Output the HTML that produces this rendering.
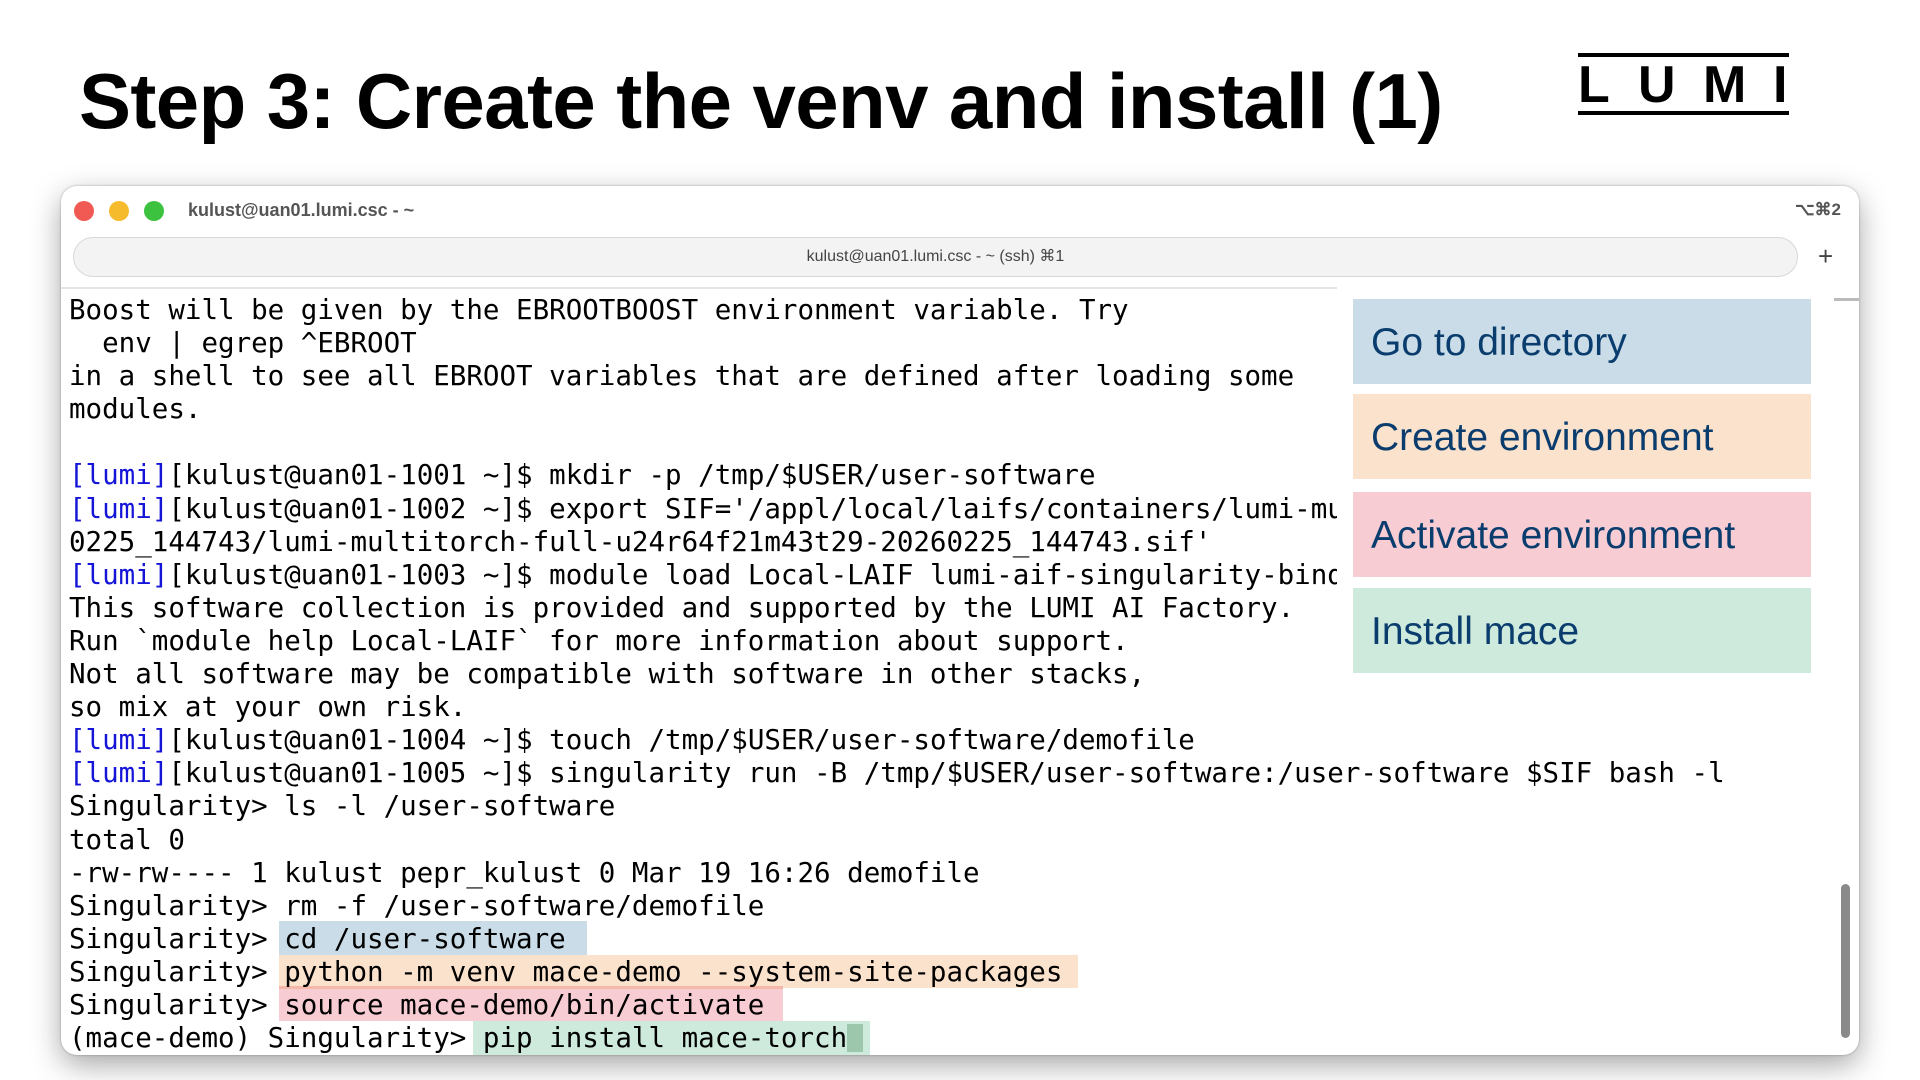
<!DOCTYPE html>
<html><head><meta charset="utf-8"><style>
*{margin:0;padding:0;box-sizing:border-box}
body{width:1920px;height:1080px;background:#fff;position:relative;overflow:hidden;font-family:"Liberation Sans",sans-serif}
.title{position:absolute;left:79px;top:56px;font-size:78px;font-weight:bold;color:#000;letter-spacing:-0.6px;white-space:nowrap}
.logo{position:absolute;left:1578px;top:53px;width:211px;height:62px;border-top:4px solid #000;border-bottom:4px solid #000}
.logo span{position:absolute;top:2px;font-size:52px;font-weight:bold;color:#000;line-height:52px}
.win{position:absolute;left:61px;top:186px;width:1798px;height:869px;background:#fff;border-radius:16px;box-shadow:0 10px 30px rgba(0,0,0,.35),0 0 2px rgba(0,0,0,.3);overflow:hidden}
.dot{position:absolute;top:15px;width:20px;height:20px;border-radius:50%}
.wt{position:absolute;left:127px;top:14px;font-size:18px;font-weight:bold;color:#555}
.k2{position:absolute;right:18px;top:14px;font-size:17px;font-weight:bold;color:#555}
.tab{position:absolute;left:12px;top:51px;width:1725px;height:40px;border:1px solid #d8d8d8;border-radius:20px;background:#f3f3f3;text-align:center;font-size:16px;line-height:38px;color:#444}
.plus{position:absolute;left:1757px;top:55px;font-size:26px;color:#444}
.sep{position:absolute;left:0;top:101px;width:1277px;height:2px;background:#e4e4e4}
.term{position:absolute;left:8px;top:108px;font-family:"DejaVu Sans Mono","Liberation Mono",monospace;font-size:27.5px;line-height:33.1px;color:#000;white-space:pre}
.b{color:#1515d8}
.hl{position:absolute}
.panel{position:absolute;left:1276px;top:99px;width:489px;height:400px;background:#fff}
.box{position:absolute;left:1292px;width:458px;height:85px;color:#0a3d6e;font-size:39px;line-height:87px;padding-left:18px}
.sb{position:absolute;left:1780px;top:698px;width:9px;height:154px;border-radius:5px;background:#8a8a8a}
.sbt{position:absolute;left:1773px;top:112px;width:26px;height:3px;background:#bbb}
</style></head><body>
<div class="title">Step 3: Create the venv and install (1)</div>
<div class="logo"><span style="left:0">L</span><span style="left:60px">U</span><span style="left:125px">M</span><span style="left:195px">I</span></div>
<div class="win">
<div class="dot" style="left:13px;background:#f05a52"></div>
<div class="dot" style="left:48px;background:#f6bb2d"></div>
<div class="dot" style="left:83px;background:#3cc23f"></div>
<div class="wt">kulust@uan01.lumi.csc - ~</div>
<div class="k2">⌥⌘2</div>
<div class="tab">kulust@uan01.lumi.csc - ~ (ssh) ⌘1</div>
<div class="plus">+</div>
<div class="sep"></div>
<div class="hl" style="left:218px;top:735px;width:308px;height:34px;background:#c9dce8"></div>
<div class="hl" style="left:218px;top:769px;width:799px;height:33px;background:#fbe2cc"></div>
<div class="hl" style="left:218px;top:800px;width:504px;height:35px;background:#f7ccd2"></div>
<div class="hl" style="left:218px;top:800px;width:504px;height:3px;background:#f5b8a8"></div>
<div class="hl" style="left:412px;top:835px;width:397px;height:34px;background:#cdeadc"></div>
<div class="hl" style="left:786px;top:838px;width:16px;height:28px;background:#9cc7ad"></div>
<div class="term">Boost will be given by the EBROOTBOOST environment variable. Try
  env | egrep ^EBROOT
in a shell to see all EBROOT variables that are defined after loading some
modules.

<span class="b">[lumi]</span>[kulust@uan01-1001 ~]$ mkdir -p /tmp/$USER/user-software
<span class="b">[lumi]</span>[kulust@uan01-1002 ~]$ export SIF='/appl/local/laifs/containers/lumi-multitorch
0225_144743/lumi-multitorch-full-u24r64f21m43t29-20260225_144743.sif'
<span class="b">[lumi]</span>[kulust@uan01-1003 ~]$ module load Local-LAIF lumi-aif-singularity-bindings
This software collection is provided and supported by the LUMI AI Factory.
Run `module help Local-LAIF` for more information about support.
Not all software may be compatible with software in other stacks,
so mix at your own risk.
<span class="b">[lumi]</span>[kulust@uan01-1004 ~]$ touch /tmp/$USER/user-software/demofile
<span class="b">[lumi]</span>[kulust@uan01-1005 ~]$ singularity run -B /tmp/$USER/user-software:/user-software $SIF bash -l
Singularity&gt; ls -l /user-software
total 0
-rw-rw---- 1 kulust pepr_kulust 0 Mar 19 16:26 demofile
Singularity&gt; rm -f /user-software/demofile
Singularity&gt; cd /user-software
Singularity&gt; python -m venv mace-demo --system-site-packages
Singularity&gt; source mace-demo/bin/activate
(mace-demo) Singularity&gt; pip install mace-torch</div>
<div class="panel"></div>
<div class="box" style="top:113px;background:#c9dce8">Go to directory</div>
<div class="box" style="top:208px;background:#fbe2cc">Create environment</div>
<div class="box" style="top:306px;background:#f7ccd2">Activate environment</div>
<div class="box" style="top:402px;background:#cdeadc">Install mace</div>
<div class="sbt"></div>
<div class="sb"></div>
</div>
</body></html>
